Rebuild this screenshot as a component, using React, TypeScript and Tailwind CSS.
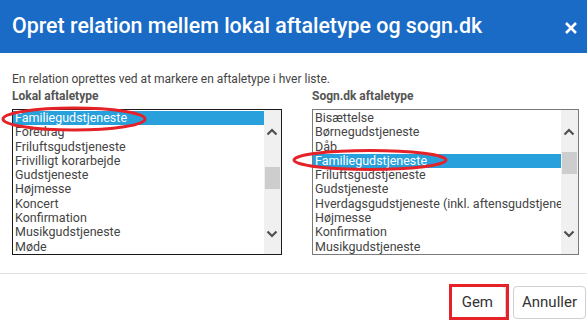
import React from 'react';

const lokal = [
  'Familiegudstjeneste',
  'Foredrag',
  'Friluftsgudstjeneste',
  'Frivilligt korarbejde',
  'Gudstjeneste',
  'Højmesse',
  'Koncert',
  'Konfirmation',
  'Musikgudstjeneste',
  'Møde',
];

const sogn = [
  'Bisættelse',
  'Børnegudstjeneste',
  'Dåb',
  'Familiegudstjeneste',
  'Friluftsgudstjeneste',
  'Gudstjeneste',
  'Hverdagsgudstjeneste (inkl. aftensgudstjeneste)',
  'Højmesse',
  'Konfirmation',
  'Musikgudstjeneste',
];

const Chevron = ({ up }: { up?: boolean }) => (
  <svg width="12" height="8" viewBox="0 0 12 8" className="block">
    <path
      d={up ? 'M1.5 6.5 L6 2 L10.5 6.5' : 'M1.5 1.5 L6 6 L10.5 1.5'}
      fill="none"
      stroke="#505050"
      strokeWidth="2.2"
    />
  </svg>
);

interface ListBoxProps {
  items: string[];
  selected: string;
  focused?: boolean;
  thumbTop: number;
}

const ListBox: React.FC<ListBoxProps> = ({ items, selected, focused, thumbTop }) => (
  <div
    className={`h-[146px] flex border overflow-hidden bg-white ${focused ? 'border-[#1a1a1a]' : 'border-[#7a7a7a]'}`}
  >
    <div className="flex-1 min-w-0 pt-px">
      {items.map((item) => (
        <div
          key={item}
          className={`h-[14.3px] leading-[14px] pl-[2px] text-[12.5px] whitespace-nowrap overflow-hidden ${
            item === selected ? 'bg-[#28a0dc] text-white' : 'text-[#444]'
          }`}
        >
          {item}
        </div>
      ))}
    </div>
    <div className="w-[17px] shrink-0 bg-[#f0f0f0] relative">
      <div className="absolute left-[2px] top-[18px]">
        <Chevron up />
      </div>
      <div className="absolute left-[1px] w-[15px] h-[22px] bg-[#cdcdcd]" style={{ top: thumbTop }} />
      <div className="absolute left-[2px] top-[120px]">
        <Chevron />
      </div>
    </div>
  </div>
);

export default function App() {
  return (
    <div className="w-[587px] h-[325px] bg-white relative overflow-hidden font-['Roboto',sans-serif]">
      <div className="h-[53px] bg-[#1a6bc6] flex items-center justify-between pl-[12px] pr-[9px]">
        <h1 className="text-white text-[21.4px] font-medium leading-none pb-[2px]">
          Opret relation mellem lokal aftaletype og sogn.dk
        </h1>
        <svg width="14" height="14" viewBox="0 0 14 14" className="mt-[3px]">
          <path d="M2 2 L12 12 M12 2 L2 12" stroke="#fff" strokeWidth="2.6" />
        </svg>
      </div>

      <div className="pl-[12px] pr-[8px] pt-[18px]">
        <p className="text-[12px] leading-[16px] text-[#444]">
          En relation oprettes ved at markere en aftaletype i hver liste.
        </p>
        <div className="grid grid-cols-[270px_267px] gap-x-[30px] mt-[1px]">
          <div>
            <div className="text-[12px] leading-[16px] font-bold text-[#555] mb-[5px]">Lokal aftaletype</div>
            <ListBox items={lokal} selected="Familiegudstjeneste" focused thumbTop={57} />
          </div>
          <div>
            <div className="text-[12px] leading-[16px] font-bold text-[#555] mb-[5px]">Sogn.dk aftaletype</div>
            <ListBox items={sogn} selected="Familiegudstjeneste" thumbTop={42} />
          </div>
        </div>
      </div>

      <div className="mt-[18px] border-t border-[#e2e2e2] flex justify-end gap-[7px] pt-[12px] pr-[1px]">
        <button className="h-[33px] px-[12px] rounded-[4px] border border-[#d0d0d0] bg-white text-[15px] text-[#333]">
          Gem
        </button>
        <button className="h-[33px] w-[73px] rounded-[4px] border border-[#d0d0d0] bg-white text-[15px] text-[#333]">
          Annuller
        </button>
      </div>

      {/* annotations */}
      <svg className="absolute left-0 top-0 pointer-events-none" width="587" height="325">
        <ellipse cx="74" cy="119" rx="71" ry="11" fill="none" stroke="#e42228" strokeWidth="3" />
        <ellipse cx="370" cy="160" rx="76" ry="9.5" fill="none" stroke="#e42228" strokeWidth="3" />
        <rect x="450.5" y="285.5" width="57" height="33" fill="none" stroke="#e42228" strokeWidth="3" />
      </svg>
    </div>
  );
}
